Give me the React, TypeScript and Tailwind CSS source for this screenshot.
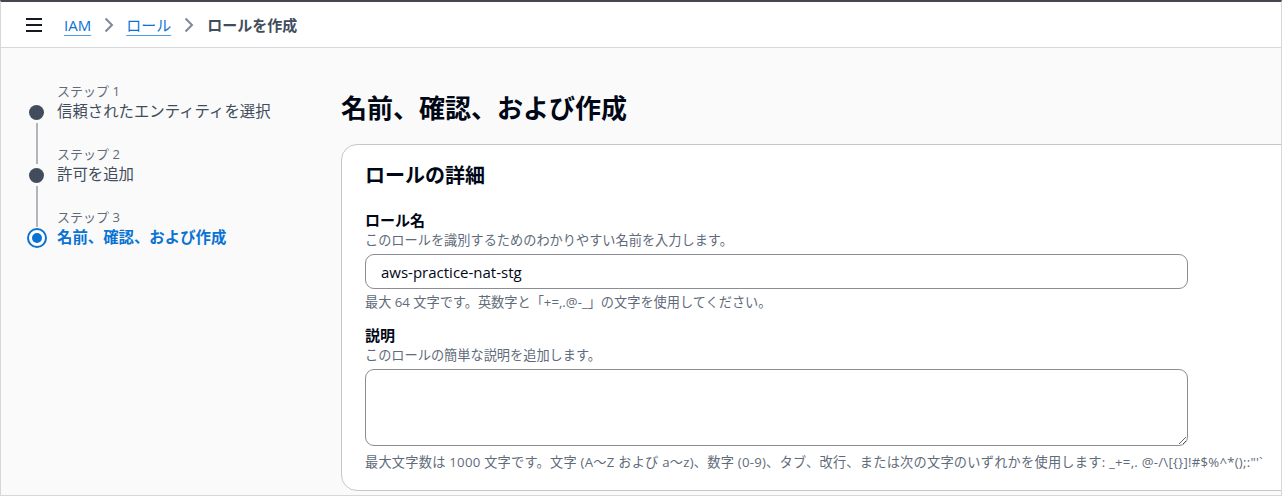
const font = "font-['Open_Sans','Noto_Sans_CJK_JP',sans-serif]"

const steps = [
  { label: "ステップ 1", title: "信頼されたエンティティを選択" },
  { label: "ステップ 2", title: "許可を追加" },
  { label: "ステップ 3", title: "名前、確認、および作成", active: true },
]

function Chevron({ className }: { className?: string }) {
  return (
    <svg width="10" height="16" viewBox="0 0 10 16" className={`text-[#7d8998] ${className ?? ""}`}>
      <path d="M1.5 1.5 8 8l-6.5 6.5" fill="none" stroke="currentColor" strokeWidth="2" />
    </svg>
  )
}

function Header() {
  return (
    <header className="flex h-[46px] shrink-0 items-center border-b border-[#d5d7db] bg-white pl-[25px]">
      <svg width="16" height="14" viewBox="0 0 16 14" className="text-[#16191f]">
        <path d="M0 1h16M0 7h16M0 13h16" stroke="currentColor" strokeWidth="2" />
      </svg>
      <nav className="ml-[22px] flex items-center text-[15px] leading-[22px]">
        <a className="text-[#0972d3] underline decoration-[#539fe5] underline-offset-[4px]">IAM</a>
        <Chevron className="ml-[13px] mr-[12px]" />
        <a className="text-[#0972d3] underline decoration-[#539fe5] underline-offset-[4px]">ロール</a>
        <Chevron className="ml-[13px] mr-[13px]" />
        <span className="font-semibold text-[#414d5c]">ロールを作成</span>
      </nav>
    </header>
  )
}

function Steps() {
  return (
    <ol className="w-[340px] shrink-0 pl-[26px] pt-[33px]">
      {steps.map((s, i) => {
        const first = i === 0
        const last = i === steps.length - 1
        return (
          <li key={s.label} className="flex">
            <div className="flex w-[19px] flex-col items-center">
              <div className={`h-[20px] w-[2px] ${first ? "" : "bg-[#b4b4bb]"}`} />
              <div className="flex h-[22px] items-center">
                {s.active ? (
                  <span className="flex size-[20px] items-center justify-center rounded-full border-2 border-[#0972d3] bg-white">
                    <span className="size-[10px] rounded-full bg-[#0972d3]" />
                  </span>
                ) : (
                  <span className="size-[15px] rounded-full bg-[#414d5c]" />
                )}
              </div>
              <div className={`w-[2px] flex-1 ${last ? "" : "bg-[#b4b4bb]"}`} />
            </div>
            <div className={`ml-[11px] ${last ? "" : "pb-[21px]"}`}>
              <div className="pt-[1px] text-[13px] leading-[18px] text-[#5f6b7a]">{s.label}</div>
              <div className={`mt-[1px] text-[15.4px] leading-[22px] ${s.active ? "font-bold text-[#0972d3]" : "text-[#414d5c]"}`}>
                {s.title}
              </div>
            </div>
          </li>
        )
      })}
    </ol>
  )
}

function RoleDetails() {
  return (
    <section className="mt-[19px] w-[960px] rounded-[16px] border border-[#c6c6cd] bg-white px-[23px] pb-[19px] pt-[18px]">
      <h2 className="text-[20px] font-bold leading-[26px] text-[#000716]">ロールの詳細</h2>

      <div className="mt-[20px] text-[15px] font-bold leading-[22px] text-[#000716]">ロール名</div>
      <p className="text-[13.2px] leading-[18px] text-[#5f6b7a]">このロールを識別するためのわかりやすい名前を入力します。</p>
      <input
        readOnly
        value="aws-practice-nat-stg"
        className="mt-[5px] block h-[35px] w-[823px] rounded-[9px] border border-[#8c8c94] bg-white px-[15px] text-[15px] text-[#000716] outline-none"
      />
      <p className="mt-[4px] text-[13.2px] leading-[18px] text-[#5f6b7a]">
        最大 64 文字です。英数字と「+=,.@-_」の文字を使用してください。
      </p>

      <div className="mt-[13px] text-[15px] font-bold leading-[22px] text-[#000716]">説明</div>
      <p className="text-[13.2px] leading-[18px] text-[#5f6b7a]">このロールの簡単な説明を追加します。</p>
      <textarea
        readOnly
        className="mt-[5px] block h-[77px] w-[823px] resize rounded-[9px] border border-[#8c8c94] bg-white px-[15px] py-[6px] text-[15px] outline-none"
      />
      <p className="mt-[7px] whitespace-nowrap text-[13.2px] leading-[18px] tracking-[0.25px] text-[#5f6b7a]">
        最大文字数は 1000 文字です。文字 (A〜Z および a〜z)、数字 (0-9)、タブ、改行、または次の文字のいずれかを使用します: _+=,. @-/\[{"{}"}]!#$%^*();:"'`
      </p>
    </section>
  )
}

export default function App() {
  return (
    <div className={`${font} flex h-[496px] w-full flex-col overflow-hidden border-x border-b border-t-2 border-x-[#d5d7db] border-b-[#d5d7db] border-t-[#44474e] bg-[#fafafa]`}>
      <Header />
      <main className="flex min-h-0 flex-1">
        <Steps />
        <div className="min-w-0 flex-1 pt-[43px]">
          <h1 className="text-[26px] font-bold leading-[34px] text-[#000716]">名前、確認、および作成</h1>
          <RoleDetails />
        </div>
      </main>
    </div>
  )
}
